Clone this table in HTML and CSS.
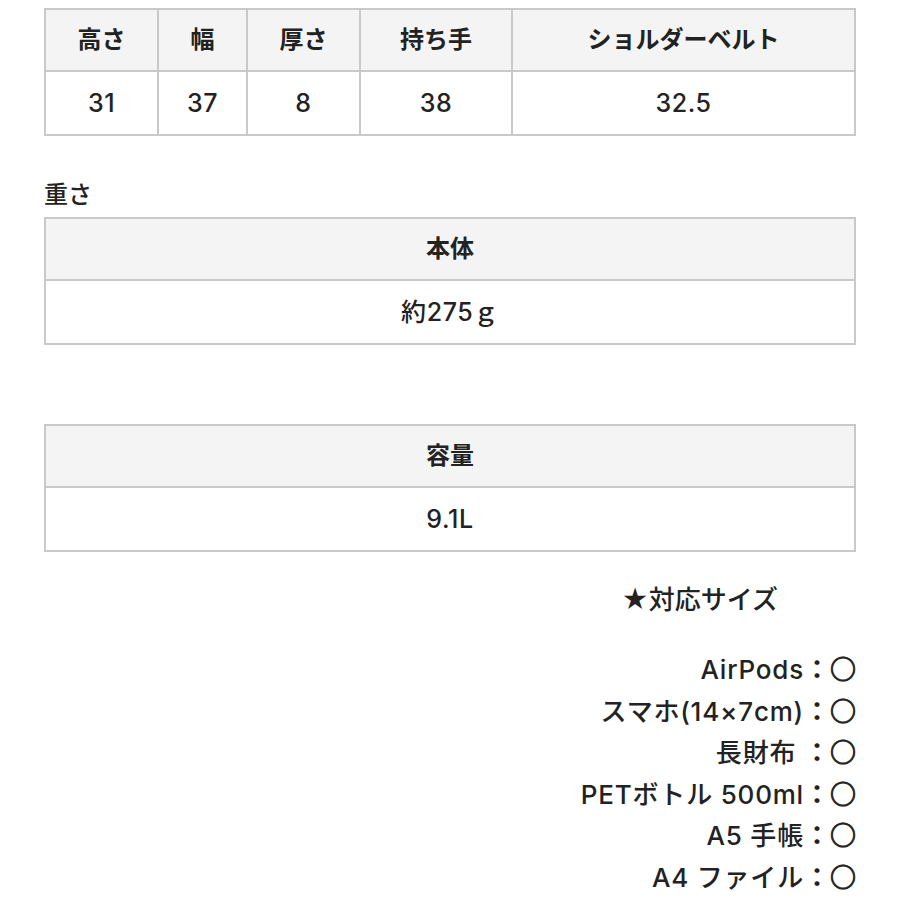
FILE: index.html
```html
<!DOCTYPE html>
<html lang="ja">
<head>
<meta charset="utf-8">
<link rel="stylesheet" href="styles.css">
</head>
<body>
<div class="page">
  <table class="spec sizes">
    <colgroup>
      <col style="width:113px"><col style="width:89px"><col style="width:113px"><col style="width:152px"><col>
    </colgroup>
    <tr class="head"><th>高さ</th><th>幅</th><th>厚さ</th><th>持ち手</th><th>ショルダーベルト</th></tr>
    <tr><td>31</td><td>37</td><td>8</td><td>38</td><td>32.5</td></tr>
  </table>

  <div class="label">重さ</div>
  <table class="spec">
    <tr class="head"><th>本体</th></tr>
    <tr><td>約275ｇ</td></tr>
  </table>

  <table class="spec cap">
    <tr class="head"><th>容量</th></tr>
    <tr><td>9.1L</td></tr>
  </table>

  <div class="fit">
    <div class="fit-title">★対応サイズ</div>
    <ul class="fit-list">
      <li>AirPods<span class="cjk">：<span class="mark">○</span></span></li>
      <li>スマホ(14×7cm)<span class="cjk">：<span class="mark">○</span></span></li>
      <li>長財布 <span class="cjk">：<span class="mark">○</span></span></li>
      <li>PETボトル 500ml<span class="cjk">：<span class="mark">○</span></span></li>
      <li>A5 手帳<span class="cjk">：<span class="mark">○</span></span></li>
      <li>A4 ファイル<span class="cjk">：<span class="mark">○</span></span></li>
    </ul>
  </div>
</div>
</body>
</html>
```

FILE: styles.css
```css
html, body {
  margin: 0;
  padding: 0;
  background: #ffffff;
}
body {
  font-family: "Inter", "Noto Sans CJK JP", sans-serif;
  color: #222222;
}
.cjk {
  font-family: "Noto Sans CJK JP", sans-serif;
  letter-spacing: 0;
  font-weight: 700;
}
.mark {
  font-weight: 700;
  -webkit-text-stroke: 0.9px #222222;
}
.page {
  padding: 8px 44px 0 44px;
}
.spec {
  width: 812px;
  border-collapse: collapse;
  table-layout: fixed;
}
.spec th, .spec td {
  border: 2px solid #c9c9c9;
  text-align: center;
  padding: 0;
  line-height: 30px;
}
.spec .head th {
  background: #f4f4f4;
  height: 60px;
  font-size: 24px;
  font-weight: bold;
}
.spec td {
  height: 62px;
  font-size: 25px;
  font-weight: 500;
  letter-spacing: 0.6px;
}
.label {
  font-size: 24px;
  font-weight: 500;
  margin-top: 37px;
  height: 44px;
  line-height: 44px;
}
.cap {
  margin-top: 79px;
}
.fit {
  display: flex;
  flex-direction: column;
  align-items: flex-end;
}
.fit-title {
  font-size: 26px;
  font-weight: 500;
  margin-top: 30px;
  margin-right: 78px;
  line-height: 36px;
}
.fit-list {
  list-style: none;
  margin: 29px 0 0 0;
  padding: 0;
  text-align: right;
  font-size: 26px;
  font-weight: 500;
  letter-spacing: 0.8px;
}
.fit-list li {
  height: 41.6px;
  line-height: 41.6px;
  white-space: nowrap;
}
.fit-list li span {
  line-height: 41.6px;
}
```
